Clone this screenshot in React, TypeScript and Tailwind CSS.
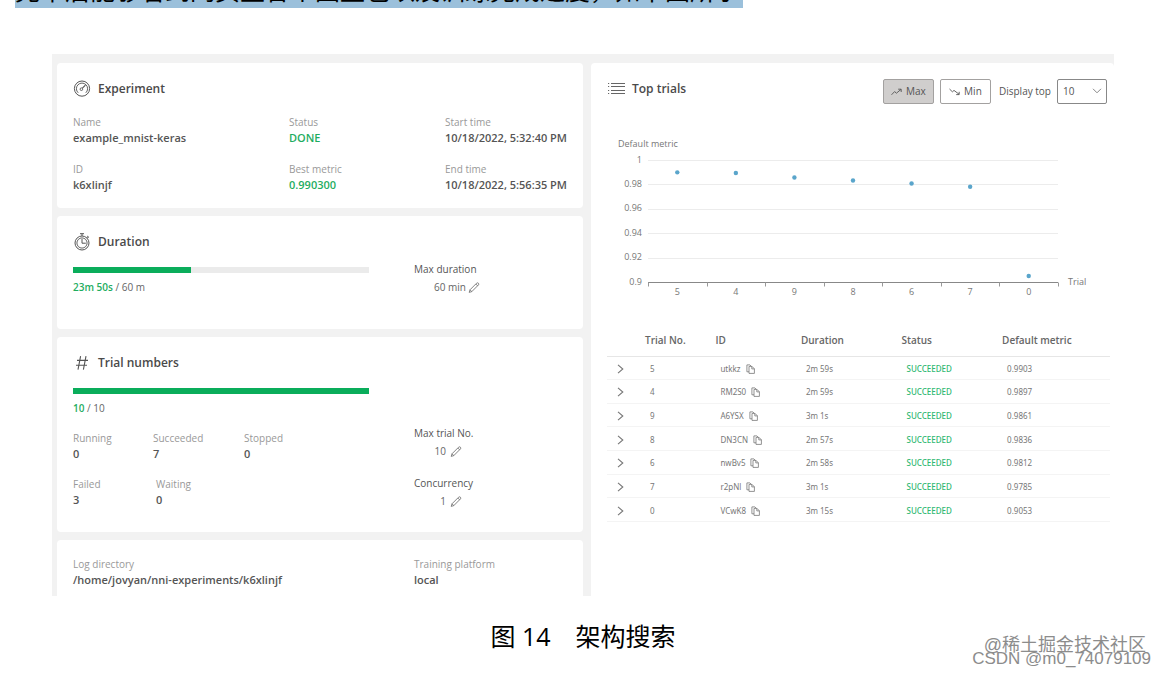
import { useState } from "react";
import type { ReactNode } from "react";

const TRIALS = [
  { no: 5, id: "utkkz", duration: "2m 59s", metric: 0.9903 },
  { no: 4, id: "RM2S0", duration: "2m 59s", metric: 0.9897 },
  { no: 9, id: "A6YSX", duration: "3m 1s", metric: 0.9861 },
  { no: 8, id: "DN3CN", duration: "2m 57s", metric: 0.9836 },
  { no: 6, id: "nwBv5", duration: "2m 58s", metric: 0.9812 },
  { no: 7, id: "r2pNl", duration: "3m 1s", metric: 0.9785 },
  { no: 0, id: "VCwK8", duration: "3m 15s", metric: 0.9053 },
];

const Y_TICKS = [1, 0.98, 0.96, 0.94, 0.92, 0.9];

// Chart geometry, in viewBox units.
const AXIS_LEFT = 41;
const AXIS_RIGHT = 451;
const AXIS_TOP = 24.5;
const AXIS_BOTTOM = 146.5;
const STEP = (AXIS_RIGHT - AXIS_LEFT) / TRIALS.length;

const yOf = (value: number) => AXIS_TOP + ((1 - value) / 0.1) * (AXIS_BOTTOM - AXIS_TOP);

function GaugeIcon() {
  return (
    <svg viewBox="0 0 18 18" className="size-[18px]" fill="none" stroke="#555" aria-hidden>
      <circle cx="9" cy="8.6" r="7.6" strokeWidth="1" />
      <path d="M5.2 12.8A5.6 5.6 0 1 1 12.8 12.8" strokeWidth="0.9" />
      <circle cx="8.4" cy="9.2" r="1.3" strokeWidth="0.9" />
      <path d="M9.4 8.2 12.4 5.2" strokeWidth="1.1" />
    </svg>
  );
}

function StopwatchIcon() {
  return (
    <svg viewBox="0 0 18 18" className="size-[18px]" fill="none" stroke="#555" aria-hidden>
      <circle cx="9" cy="10" r="7" strokeWidth="1" />
      <circle cx="9" cy="10" r="5.1" strokeWidth="0.9" />
      <path d="M9 6v4.2h3.8M7 .7h4M9 .7V3M14.2 3l1.6 1.6M14 4.8l1.2-1.2" strokeWidth="1" />
    </svg>
  );
}

function HashIcon() {
  return (
    <svg viewBox="0 0 18 18" className="size-[18px]" fill="none" stroke="#555" aria-hidden>
      <path d="M7.6 2.2 5 15.6M13 2.2l-2.6 13.4M4 6.4h11M3 11.2h11" strokeWidth="1.1" />
    </svg>
  );
}

function ListIcon() {
  return (
    <svg viewBox="0 0 18 18" className="size-[18px]" fill="none" stroke="#666" aria-hidden>
      <path d="M4 3.5h14M4 6.5h14M4 10.5h14M4 13.5h14" strokeWidth="1" />
      <path d="M1 3.5h1.2M1 6.5h1.2M1 10.5h1.2M1 13.5h1.2" strokeWidth="1" />
    </svg>
  );
}

function TrendIcon({ down }: { down?: boolean }) {
  return (
    <svg viewBox="0 0 11 8" className="h-2 w-[11px]" fill="none" stroke="#555" strokeWidth="0.9" aria-hidden>
      {down ? (
        <path d="M.5 1 3.4 3.8 5 2.4 10 6.2M7.2 6.6h3V3.8" />
      ) : (
        <path d="M.5 6.8 3.6 3.6 5.4 5.2 10 1.4M7.2 1.2h3V4" />
      )}
    </svg>
  );
}

function PencilIcon() {
  return (
    <svg viewBox="0 0 12 12" className="size-3" fill="none" stroke="#666" strokeWidth="0.8" aria-hidden>
      <path d="M1.2 10.4 2 7.8 8.6 1.2Q9.6.4 10.5 1.3 11.2 2.2 10.4 3L3.8 9.6Z" />
      <path d="M2 7.8 3.8 9.6M7.8 2 9.6 3.8" />
    </svg>
  );
}

function CopyIcon() {
  return (
    <svg viewBox="0 0 9 10" className="h-[10px] w-[9px]" fill="none" stroke="#777" strokeWidth="0.8" aria-hidden>
      <path d="M3 7.8H.9V.9h3L5 2M3 2.4h3L8.4 4.8v4.6H3ZM5.8 2.4v2.5h2.5" />
    </svg>
  );
}

function Card({ children, className }: { children: ReactNode; className: string }) {
  return <section className={`rounded-sm bg-white pl-4 ${className}`}>{children}</section>;
}

function Title({ icon, children }: { icon: ReactNode; children: ReactNode }) {
  return (
    <h2 className="flex h-5 items-center gap-[7px] text-[12px] font-semibold text-[#4a4a4a]">
      {icon}
      {children}
    </h2>
  );
}

function Field({ label, value, green }: { label: string; value: string; green?: boolean }) {
  return (
    <div>
      <dt className="text-[10px] leading-[15px] text-[#999]">{label}</dt>
      <dd className={`text-[11px] leading-[15px] font-semibold ${green ? "text-[#1fad5f]" : "text-[#555]"}`}>
        {value}
      </dd>
    </div>
  );
}

function Progress({ percent, done, total }: { percent: number; done: string; total: string }) {
  return (
    <div className="pt-[5px] pr-[45px]">
      <div className="h-[6px] bg-[#ebebeb]">
        <div className="h-full bg-[#0aad5b]" style={{ width: `${percent}%` }} />
      </div>
      <p className="mt-[7px] text-[10px] leading-[15px] text-[#666]">
        <span className="font-semibold text-[#1fad5f]">{done}</span> / {total}
      </p>
    </div>
  );
}

function Editable({ label, value, wide }: { label: string; value: string; wide?: boolean }) {
  return (
    <div>
      <p className="text-[10px] leading-[15px] text-[#555]">{label}</p>
      <div className={`mt-[3px] flex h-[15px] items-center text-[10px] text-[#666] ${wide ? "gap-0.5 pl-5" : "gap-1"}`}>
        <span className={wide ? "" : "w-8 text-right"}>{value}</span>
        <button type="button" aria-label={`Edit ${label}`}>
          <PencilIcon />
        </button>
      </div>
    </div>
  );
}

function MetricChart() {
  return (
    <svg viewBox="0 0 503 164" className="mt-8 w-full" role="img" aria-label="Default metric by trial">
      <g fill="#777" fontSize="9">
        <text x="11" y="11">Default metric</text>
        {Y_TICKS.map((tick) => (
          <text key={tick} x="35" y={yOf(tick) + 2} textAnchor="end">
            {tick}
          </text>
        ))}
        {TRIALS.map((t, i) => (
          <text key={t.no} x={AXIS_LEFT + STEP * (i + 0.5)} y="159" textAnchor="middle">
            {t.no}
          </text>
        ))}
        <text x="461" y="149">Trial</text>
      </g>
      {Y_TICKS.slice(0, -1).map((tick) => (
        <path key={tick} d={`M${AXIS_LEFT} ${Math.floor(yOf(tick)) + 0.5}H${AXIS_RIGHT}`} stroke="#ececec" />
      ))}
      <path d={`M${AXIS_LEFT} ${AXIS_BOTTOM}H${AXIS_RIGHT}`} stroke="#888" />
      {Array.from({ length: TRIALS.length + 1 }, (_, i) => (
        <path key={i} d={`M${Math.round(AXIS_LEFT + STEP * i) + 0.5} ${AXIS_BOTTOM}v4`} stroke="#999" />
      ))}
      {TRIALS.map((t, i) => (
        <circle key={t.no} cx={AXIS_LEFT + STEP * (i + 0.5)} cy={yOf(t.metric)} r="2.2" fill="#5aa5cb" />
      ))}
    </svg>
  );
}

function TrialTable() {
  return (
    <table className="mt-6 h-[198px] w-full table-fixed border-collapse text-left text-[#777]">
      <colgroup>
        <col className="w-[38px]" />
        <col className="w-[14%]" />
        <col className="w-[17%]" />
        <col className="w-[20%]" />
        <col className="w-[20%]" />
        <col />
      </colgroup>
      <thead>
        <tr className="h-8 border-b border-[#e6e6e6] text-[10px] text-[#666] [&>th]:pt-0.5 [&>th]:font-semibold">
          <th aria-label="Expand" />
          <th>Trial No.</th>
          <th>ID</th>
          <th>Duration</th>
          <th>Status</th>
          <th>Default metric</th>
        </tr>
      </thead>
      <tbody className="font-['Noto_Sans',sans-serif] text-[8px]">
        {TRIALS.map((t) => (
          <tr key={t.no} className="border-b border-[#f4f4f4] [&>td]:pt-0.5 [&>td]:pl-[5px]">
            <td>
              <button type="button" aria-label={`Expand trial ${t.no}`} className="block pl-[5px]">
                <svg viewBox="0 0 7 10" className="h-[10px] w-[7px]" fill="none" stroke="#777" strokeWidth="1.1">
                  <path d="M1 .8 5.8 5 1 9.2" />
                </svg>
              </button>
            </td>
            <td>{t.no}</td>
            <td>
              <span className="flex items-center gap-[5px]">
                {t.id}
                <button type="button" aria-label={`Copy ${t.id}`}>
                  <CopyIcon />
                </button>
              </span>
            </td>
            <td>{t.duration}</td>
            <td className="font-medium text-[#2fb872]">SUCCEEDED</td>
            <td>{t.metric}</td>
          </tr>
        ))}
      </tbody>
    </table>
  );
}

export default function App() {
  const [top, setTop] = useState("10");

  return (
    <div className="relative overflow-hidden bg-white font-['Open_Sans','Noto_Sans_CJK_SC',sans-serif]">
      {/* Tail of the previous paragraph, selected */}
      <div className="flex h-[54px] items-start pl-[15px]">
        <p className="flex h-2 items-end overflow-hidden font-['Noto_Sans_CJK_SC',sans-serif] text-[25px] leading-[38px] whitespace-nowrap text-black">
          <span className="bg-[#9bc0db] pr-[3px]">完毕后能够看到网页里各个图型也以及训练完成进度，如下图所示</span>
          <span>.</span>
        </p>
      </div>

      <figure>
        <div className="mx-[52px] grid grid-cols-[526fr_523fr] gap-2 bg-[#f2f2f2] pt-[9px] pl-[5px]">
          <div className="flex flex-col gap-2">
            <Card className="pt-4 pb-4">
              <Title icon={<GaugeIcon />}>Experiment</Title>
              <dl className="mt-4 grid grid-cols-[216fr_156fr_138fr] gap-y-[17px]">
                <Field label="Name" value="example_mnist-keras" />
                <Field label="Status" value="DONE" green />
                <Field label="Start time" value="10/18/2022, 5:32:40 PM" />
                <Field label="ID" value="k6xlinjf" />
                <Field label="Best metric" value="0.990300" green />
                <Field label="End time" value="10/18/2022, 5:56:35 PM" />
              </dl>
            </Card>

            <Card className="pt-4 pb-[34px]">
              <Title icon={<StopwatchIcon />}>Duration</Title>
              <div className="mt-[10px] grid grid-cols-[341fr_169fr]">
                <Progress percent={39.7} done="23m 50s" total="60 m" />
                <Editable label="Max duration" value="60 min" wide />
              </div>
            </Card>

            <Card className="pt-4 pb-[23px]">
              <Title icon={<HashIcon />}>Trial numbers</Title>
              <div className="mt-[10px] grid grid-cols-[341fr_169fr]">
                <div>
                  <Progress percent={100} done="10" total="10" />
                  <dl className="mt-[15px] flex">
                    <div className="w-20">
                      <Field label="Running" value="0" />
                    </div>
                    <div className="w-[91px]">
                      <Field label="Succeeded" value="7" />
                    </div>
                    <Field label="Stopped" value="0" />
                  </dl>
                  <dl className="mt-4 flex">
                    <div className="w-[83px]">
                      <Field label="Failed" value="3" />
                    </div>
                    <Field label="Waiting" value="0" />
                  </dl>
                </div>
                <div className="flex flex-col gap-[17px] pt-[43px]">
                  <Editable label="Max trial No." value="10" />
                  <Editable label="Concurrency" value="1" />
                </div>
              </div>
            </Card>

            <Card className="rounded-b-none pt-[17px] pb-[9px]">
              <dl className="grid grid-cols-[341fr_169fr]">
                <Field label="Log directory" value="/home/jovyan/nni-experiments/k6xlinjf" />
                <Field label="Training platform" value="local" />
              </dl>
            </Card>
          </div>

          <Card className="rounded-b-none pt-4 pr-1">
            <div className="flex items-start justify-between pr-[3px]">
              <Title icon={<ListIcon />}>Top trials</Title>
              <div className="flex h-[25px] items-stretch text-[10px] text-[#555]">
                <button
                  type="button"
                  className="flex w-[51px] items-center justify-center gap-1 rounded-xs border border-[#a3a1a0] bg-[#d0cecd]"
                >
                  <TrendIcon />
                  Max
                </button>
                <button
                  type="button"
                  className="ml-[6px] flex w-[51px] items-center justify-center gap-1 rounded-xs border border-[#a3a1a0] bg-white"
                >
                  <TrendIcon down />
                  Min
                </button>
                <label htmlFor="display-top" className="ml-2 self-center">
                  Display top
                </label>
                <div className="relative ml-[6px] flex">
                  <select
                    id="display-top"
                    value={top}
                    onChange={(e) => setTop(e.target.value)}
                    className="w-[50px] appearance-none rounded-xs border border-[#888] bg-white pl-[5px]"
                  >
                    <option>10</option>
                    <option>20</option>
                    <option>30</option>
                  </select>
                  <svg
                    viewBox="0 0 10 6"
                    className="pointer-events-none absolute top-[9px] right-[5px] h-[6px] w-[10px]"
                    fill="none"
                    stroke="#888"
                  >
                    <path d="M1 .8 5 4.8 9 .8" />
                  </svg>
                </div>
              </div>
            </div>
            <MetricChart />
            <TrialTable />
          </Card>
        </div>

        <figcaption className="pt-6 pb-6 text-center text-[25px] leading-8 text-black">
          图 14　架构搜索
        </figcaption>
      </figure>

      {/* Watermarks */}
      <div className="absolute right-[15px] bottom-[11px] flex flex-col items-end font-['Liberation_Sans','Noto_Sans_CJK_SC',sans-serif] text-[#8c8c8c]">
        <span className="mr-[5px] text-[18px] leading-[13px]">@稀土掘金技术社区</span>
        <span className="text-[17px] leading-[13px]">CSDN @m0_74079109</span>
      </div>
    </div>
  );
}
